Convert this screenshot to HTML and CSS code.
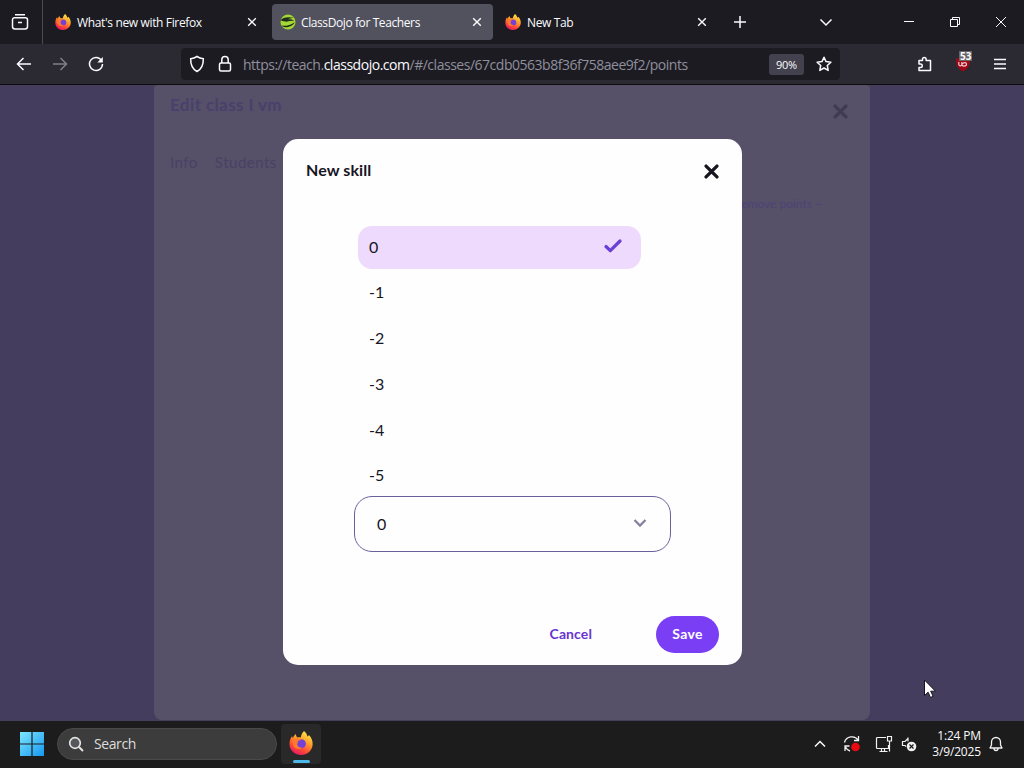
FILE: index.html
```html
<!DOCTYPE html>
<html lang="en">
<head>
    <meta charset="UTF-8">
    <meta name="viewport" content="width=device-width, initial-scale=1.0">
    <title>ClassDojo for Teachers</title>
    <link rel="stylesheet" href="styles.css">
</head>
<body>
    <!-- Shared icons -->
    <svg class="defs" width="0" height="0">
        <defs>
            <linearGradient id="flame" x1="0.8" y1="0" x2="0.3" y2="1">
                <stop offset="0" stop-color="#fff04a"/>
                <stop offset="0.4" stop-color="#ffa02a"/>
                <stop offset="0.75" stop-color="#ff4538"/>
                <stop offset="1" stop-color="#e3166b"/>
            </linearGradient>
            <linearGradient id="win" x1="0" y1="0" x2="1" y2="1">
                <stop offset="0" stop-color="#7ee6ff"/>
                <stop offset="1" stop-color="#1498f0"/>
            </linearGradient>
            <symbol id="firefox" viewBox="0 0 24 24">
                <path d="M15 0c2 1.500 3 3.500 3.500 5.500.8-.3 1.200-.8 1.400-1.500C22.500 6.500 24 10 23.600 14 23 20 18 24 12 24S.5 19.500.5 13c0-3 .8-5.500 2.500-8 .2 1 .5 1.600 1 2 .5-1.600 1.500-3 3-4-.1 1.500.3 2.500 1.500 3.500 1.200-.2 2.300-.2 3.300 0C12 4 13.200 1.800 15 0z" fill="url(#flame)"/>
                <circle cx="12.300" cy="12.800" r="4.600" fill="#7540d8"/>
                <path d="M4.500 9c2-2.200 5.500-2 7.500-.2-1 .8-2.600 1-3.400 1.400.4 1 .2 2-.4 3 .5 2.500 2.500 3.800 5 3.200-2 2.800-7 2-8.700-1.200C3.200 12.800 3.200 11 4.500 9z" fill="#ff7a2a"/>
            </symbol>
            <symbol id="close" viewBox="0 0 10 10">
                <path d="M1.200 1.200l7.600 7.600M8.800 1.200L1.200 8.800" stroke="currentColor" stroke-width="1.400"/>
            </symbol>
            <symbol id="cross" viewBox="0 0 16 16">
                <path d="M2.200 2.200l11.600 11.600M13.800 2.200L2.200 13.800" stroke="currentColor" stroke-width="3.500" stroke-linecap="round"/>
            </symbol>
        </defs>
    </svg>

    <!-- Tab strip -->
    <div class="tabbar">
        <div class="archive">
            <svg width="18" height="18" viewBox="0 0 18 18" class="line"><path d="M4 1.700h10M3.500 4.700h11a2 2 0 0 1 2 2v6.900a2.500 2.500 0 0 1-2.500 2.500H4a2.500 2.500 0 0 1-2.500-2.500V6.700a2 2 0 0 1 2-2zM7 9.500h4"/></svg>
        </div>
        <div class="tab">
            <svg width="16" height="16"><use href="#firefox"/></svg>
            <span class="tab-title">What's new with Firefox</span>
            <svg class="tab-close" width="10" height="10"><use href="#close"/></svg>
        </div>
        <div class="tab active">
            <svg width="16" height="16" viewBox="0 0 16 16">
                <circle cx="8" cy="8" r="7.500" fill="#a4d636"/>
                <path d="M.6 6.200C3 3 8 2.500 14 3.800c-2.500.4-4.500.8-6.500 1.600 2.500-.2 5 .2 6.700 1.400-3-.2-5.500.2-7.700 1C5 7.500 3 7.200.6 6.200zM1.500 11.500c3 .8 8.500.2 13-3.300-1 3.200-5.500 5-9 5-1.800 0-3.200-.6-4-1.700z" fill="#1c2b1c"/>
            </svg>
            <span class="tab-title">ClassDojo for Teachers</span>
            <svg class="tab-close" width="10" height="10"><use href="#close"/></svg>
        </div>
        <div class="tab">
            <svg width="16" height="16"><use href="#firefox"/></svg>
            <span class="tab-title">New Tab</span>
            <svg class="tab-close" width="10" height="10"><use href="#close"/></svg>
        </div>
        <svg class="new-tab line" width="14" height="14" viewBox="0 0 14 14"><path d="M7 1v12M1 7h12"/></svg>
        <svg class="all-tabs line" width="14" height="14" viewBox="0 0 14 14"><path d="M1.500 4.500L7 10l5.500-5.500"/></svg>
        <div class="window-buttons">
            <svg width="12" height="12" viewBox="0 0 12 12" class="thin"><path d="M1 5.500h10"/></svg>
            <svg width="12" height="12" viewBox="0 0 12 12" class="thin"><path d="M1.500 3.500h7v7h-7zM3.500 3.500v-2h7v7h-2"/></svg>
            <svg width="12" height="12" viewBox="0 0 12 12" class="thin"><path d="M1 1l10 10M11 1L1 11"/></svg>
        </div>
    </div>

    <!-- Address bar -->
    <div class="toolbar">
        <div class="nav">
            <svg width="16" height="16" viewBox="0 0 16 16" class="line"><path d="M15 8H1.500M7.500 2l-6 6 6 6"/></svg>
            <svg width="16" height="16" viewBox="0 0 16 16" class="line dim"><path d="M1 8h13.500M8.500 2l6 6-6 6"/></svg>
            <svg width="16" height="16" viewBox="0 0 16 16" class="line"><path d="M13.500 4.500A6.500 6.500 0 1 0 14.500 8"/><path d="M14.800 1v5.500H9.300z" fill="#fbfbfe" stroke="none"/></svg>
        </div>
        <div class="urlbar">
            <svg width="16" height="18" viewBox="0 0 16 18" class="line"><path d="M8 1.500c2 1.300 4 2 6.300 2.200C14.500 9.500 12.500 14 8 16.500 3.500 14 1.500 9.500 1.700 3.700 4 3.500 6 2.800 8 1.500z"/></svg>
            <svg class="lock line" width="14" height="18" viewBox="0 0 14 18"><rect x="1.500" y="8" width="11" height="8" rx="1.500"/><path d="M3.800 8V4.800a3.200 3.200 0 0 1 6.400 0V8"/></svg>
            <span class="url">https://teach.<b>classdojo.com</b>/#/classes/67cdb0563b8f36f758aee9f2/points</span>
            <span class="zoom">90%</span>
            <svg width="16" height="16" viewBox="0 0 16 16" class="line"><path d="M8 1.200l2 4.400 4.900.6-3.600 3.300.9 4.900L8 12l-4.200 2.400.9-4.900L1.100 6.200 6 5.600z" stroke-linejoin="round"/></svg>
        </div>
        <div class="tools">
            <svg width="16" height="16" viewBox="0 0 16 16" class="line"><path d="M2 4.500h3.500V3.200a1.800 1.800 0 0 1 3.600 0v1.300h4.400v10H2v-3h1.500a1.700 1.700 0 0 0 0-3.500H2z" stroke-linejoin="round"/></svg>
            <div class="ublock">
                <svg width="16" height="16" viewBox="0 0 16 16"><path d="M8 0c2 1.500 4.500 2.500 7 2.500 0 6-1 9.500-7 13C2 12 1 8.500 1 2.500 3.500 2.500 6 1.500 8 0z" fill="#a00817"/><path d="M3.800 6v2.300c0 2 3 2 3 0V6M6.800 8.300c0 2.300 4.700 2.300 4.700 0S8.500 6.300 7.500 8" fill="none" stroke="#f3c9cd" stroke-width="1.200"/></svg>
                <span class="count">53</span>
            </div>
            <svg width="14" height="14" viewBox="0 0 14 14" class="line"><path d="M1 2.500h12M1 7h12M1 11.500h12"/></svg>
        </div>
    </div>

    <!-- Page -->
    <div class="page">
        <div class="edit-class">
            <div class="edit-head">
                <h1>Edit class I vm</h1>
                <svg width="15" height="15"><use href="#cross"/></svg>
            </div>
            <div class="edit-tabs"><span>Info</span><span>Students</span></div>
            <div class="edit-link">remove points –</div>
        </div>

        <div class="overlay">
            <div class="modal">
                <div class="modal-head">
                    <h2>New skill</h2>
                    <svg width="15" height="15"><use href="#cross"/></svg>
                </div>
                <ul class="options">
                    <li class="selected">0
                        <svg width="20" height="16" viewBox="0 0 20 16"><path d="M3 8.500l4.300 4.200L17 3" fill="none" stroke="#6a3fd8" stroke-width="3.200" stroke-linecap="round" stroke-linejoin="round"/></svg>
                    </li>
                    <li>-1</li>
                    <li>-2</li>
                    <li>-3</li>
                    <li>-4</li>
                    <li>-5</li>
                </ul>
                <div class="select">0
                    <svg width="14" height="10" viewBox="0 0 14 10"><path d="M1.500 2l5.500 5.500L12.500 2" fill="none" stroke="#85819f" stroke-width="2.300"/></svg>
                </div>
                <div class="actions">
                    <span class="cancel">Cancel</span>
                    <span class="save">Save</span>
                </div>
            </div>
        </div>
        <svg class="cursor" width="14" height="20" viewBox="0 0 14 20"><path d="M1.500 1v15.500l3.600-3.300 2.400 5.300 2.600-1.200-2.400-5.100h4.800z" fill="#fff" stroke="#15131f" stroke-width="1"/></svg>
    </div>

    <!-- Taskbar -->
    <div class="taskbar">
        <svg class="start" width="24" height="24" viewBox="0 0 24 24"><path d="M0 0h11.400v11.400H0zM12.600 0H24v11.400H12.600zM0 12.600h11.400V24H0zM12.600 12.600H24V24H12.600z" fill="url(#win)"/></svg>
        <div class="search">
            <svg width="16" height="16" viewBox="0 0 16 16"><circle cx="7" cy="7" r="5.300" fill="#55575a" stroke="#e4e4e4" stroke-width="1.700"/><path d="M11 11l4 4" stroke="#e4e4e4" stroke-width="1.900"/></svg>
            <span>Search</span>
        </div>
        <div class="task">
            <svg width="24" height="24"><use href="#firefox"/></svg>
        </div>
        <div class="tray">
            <svg class="chev line" width="12" height="8" viewBox="0 0 12 8"><path d="M1 6.500l5-5 5 5"/></svg>
            <svg class="sync" width="18" height="18" viewBox="0 0 18 18"><path d="M1.500 7.500C3 1 12 0 15 5M15.500 1v4.500H11M2 16v-5h4.500M2.500 12c1 2 2.500 3.500 4.500 4" fill="none" stroke="#f2f2f2" stroke-width="1.300"/><circle cx="12.500" cy="12" r="4.300" fill="#ea0a12"/></svg>
            <svg class="net" width="18" height="18" viewBox="0 0 18 18"><path d="M11 2.500H2.500a1 1 0 0 0-1 1v9a1 1 0 0 0 1 1h11V10M4.500 16.500h8M6.500 13.500v3M9.500 13.500v3M12.500 1.500h4v4.500h-4zM14.500 6v10.500" fill="none" stroke="#f2f2f2" stroke-width="1.200"/></svg>
            <svg class="sound" width="16" height="16" viewBox="0 0 16 16"><path d="M7 2.500L4 5.500H1.500v4H4l1 1M7 1.500v4" fill="none" stroke="#f2f2f2" stroke-width="1.200"/><circle cx="10.500" cy="10.500" r="4.800" fill="#f2f2f2"/><path d="M8.500 8.500l4 4M12.500 8.500l-4 4" stroke="#1c1c1c" stroke-width="1.200"/></svg>
            <div class="clock"><span>1:24 PM</span><span>3/9/2025</span></div>
            <svg class="bell" width="14" height="16" viewBox="0 0 14 16"><path d="M1 12h12l-1.500-3V6a4.500 4.500 0 0 0-9 0v3zM5 12.500a2 2 0 0 0 4 0" fill="none" stroke="#f2f2f2" stroke-width="1.300" stroke-linejoin="round"/></svg>
        </div>
    </div>
</body>
</html>
```

FILE: styles.css
```css
* {
    box-sizing: border-box;
}

body {
    margin: 0;
    width: 1024px;
    height: 768px;
    overflow: hidden;
    display: flex;
    flex-direction: column;
    font-family: "Open Sans", "Noto Sans", sans-serif;
    font-size: 12px;
    color: #fbfbfe;
    background-color: #1c1b22;
}

svg {
    display: block;
    flex: none;
}

.defs {
    position: absolute;
}

.line {
    fill: none;
    stroke: #fbfbfe;
    stroke-width: 1.5;
}

.thin {
    fill: none;
    stroke: #fbfbfe;
    stroke-width: 1;
}

.dim {
    opacity: 0.4;
}

/* Tab strip */
.tabbar {
    flex: none;
    height: 44px;
    display: flex;
    align-items: center;
    background-color: #1c1b22;
}

.archive {
    width: 43px;
    height: 44px;
    padding-left: 11px;
    display: flex;
    align-items: center;
    border-right: 1px solid #4b4a55;
}

.tab {
    width: 221px;
    height: 36px;
    margin-left: 4px;
    padding: 0 11px 0 8px;
    display: flex;
    align-items: center;
    border-radius: 4px;
}

.tab.active {
    background-color: #52525e;
}

.tab-title {
    margin-left: 6px;
    white-space: nowrap;
    letter-spacing: -0.35px;
}

.active .tab-title {
    margin-left: 5px;
    letter-spacing: -0.4px;
}

.tab-close {
    margin-left: auto;
}

.new-tab {
    margin-left: 15px;
}

.all-tabs {
    margin-left: 72px;
}

.window-buttons {
    margin-left: auto;
    padding-right: 17px;
    display: flex;
    gap: 34px;
}

/* Address bar */
.toolbar {
    flex: none;
    height: 41px;
    display: flex;
    align-items: center;
    background-color: #2b2a33;
    border-bottom: 1px solid #0c0c0d;
}

.nav {
    width: 181px;
    padding-left: 16px;
    display: flex;
    gap: 20px;
}

.urlbar {
    width: 659px;
    height: 32px;
    padding: 0 8px;
    display: flex;
    align-items: center;
    background-color: #1c1b22;
    border-radius: 4px;
}

.lock {
    margin-left: 13px;
}

.url {
    margin-left: 11px;
    padding-top: 1px;
    font-size: 14px;
    color: #8f8f9d;
    white-space: nowrap;
    letter-spacing: -0.48px;
}

.url b {
    font-weight: normal;
    color: #fbfbfe;
}

.zoom {
    width: 35px;
    height: 21px;
    margin: 0 12px 0 auto;
    line-height: 21px;
    text-align: center;
    font-size: 11px;
    letter-spacing: -0.3px;
    background-color: #42414d;
    border-radius: 3px;
}

.tools {
    margin-left: auto;
    padding-right: 17px;
    display: flex;
    align-items: center;
    gap: 22px;
}

.ublock {
    position: relative;
}

.count {
    position: absolute;
    left: 4px;
    top: -5px;
    padding: 0 1px;
    font-size: 10px;
    font-weight: bold;
    line-height: 10px;
    background-color: #666;
}

/* Page */
.page {
    position: relative;
    height: 636px;
    background-color: #443d5e;
    font-family: Lato, sans-serif;
    overflow: hidden;
}

.edit-class {
    width: 716px;
    height: 635px;
    margin-left: 154px;
    padding: 9px 22px 0 16px;
    background-color: #565068;
    border-radius: 4px 4px 8px 8px;
    color: #484267;
}

.edit-head {
    height: 34px;
    display: flex;
    justify-content: space-between;
}

.edit-head h1 {
    margin: 0;
    font-size: 17px;
    line-height: 22px;
    font-weight: bold;
    letter-spacing: 0.4px;
    color: #48416b;
}

.edit-head svg {
    margin-top: 10px;
    color: #403b51;
}

.edit-tabs {
    margin-top: 23px;
    display: flex;
    gap: 17px;
    font-size: 15px;
    line-height: 22px;
    letter-spacing: 0.5px;
}

.edit-link {
    margin: 23px 26px 0 0;
    text-align: right;
    font-size: 12px;
    line-height: 16px;
    color: #4c4577;
}

.overlay {
    position: absolute;
    top: 0;
    left: 0;
    width: 1025px;
    height: 634px;
    display: flex;
    align-items: center;
    justify-content: center;
}

.modal {
    width: 459px;
    height: 526px;
    padding: 20px 23px 12px;
    display: flex;
    flex-direction: column;
    background-color: #fefefe;
    border-radius: 15px;
    color: #17151f;
}

.modal-head {
    height: 24px;
    display: flex;
    align-items: center;
    justify-content: space-between;
}

.modal-head h2 {
    margin: 0;
    padding-bottom: 3px;
    font-size: 16px;
    line-height: 22px;
    letter-spacing: 0.1px;
}

.options {
    width: 283px;
    margin: 43px 0 0 52px;
    padding: 0;
    display: flex;
    flex-direction: column;
    gap: 2.8px;
    list-style: none;
    font-size: 16px;
}

.options li {
    height: 43px;
    padding: 0 18px 3px 11px;
    display: flex;
    align-items: center;
    justify-content: space-between;
    border-radius: 14px;
}

.options .selected {
    background-color: #eddafc;
}

.select {
    flex: none;
    width: 317px;
    height: 56px;
    margin: -2px 0 0 48px;
    padding: 0 23px 1px 22px;
    display: flex;
    align-items: center;
    justify-content: space-between;
    border: 1px solid #68629c;
    border-radius: 18px;
    font-size: 16px;
}

.actions {
    margin-top: auto;
    display: flex;
    align-items: center;
    justify-content: flex-end;
    gap: 64px;
    font-size: 14px;
    font-weight: bold;
}

.cancel {
    padding-bottom: 2px;
    letter-spacing: 0.1px;
    color: #6834cf;
}

.save {
    width: 63px;
    height: 37px;
    line-height: 35px;
    text-align: center;
    letter-spacing: 0.3px;
    color: #fff;
    background-color: #7a3ff5;
    border-radius: 19px;
}

.cursor {
    position: absolute;
    left: 923px;
    top: 594px;
}

/* Taskbar */
.taskbar {
    flex: 1;
    padding-bottom: 2px;
    display: flex;
    align-items: center;
    background-color: #1c1c1c;
}

.start {
    margin-left: 20px;
}

.search {
    width: 220px;
    height: 32px;
    margin-left: 13px;
    padding-left: 10px;
    display: flex;
    align-items: center;
    gap: 10px;
    border: 1px solid #4a4a4a;
    border-radius: 16px;
    background-color: #3c3c3c;
    font-size: 14px;
    letter-spacing: -0.4px;
    color: #dcdcdc;
}

.task {
    width: 40px;
    height: 40px;
    margin-left: 4px;
    padding-top: 7px;
    display: flex;
    flex-direction: column;
    align-items: center;
    border-radius: 4px;
    background-color: #292929;
}

.task::after {
    content: "";
    width: 17px;
    height: 3px;
    margin-top: 5px;
    border-radius: 2px;
    background-color: #4cb8ea;
}

.tray {
    margin-left: auto;
    padding-right: 21px;
    display: flex;
    align-items: center;
}

.sync {
    margin-left: 17px;
}

.net {
    margin-left: 14px;
}

.sound {
    margin-left: 8px;
}

.clock {
    width: 64px;
    display: flex;
    flex-direction: column;
    align-items: flex-end;
    line-height: 16px;
    font-size: 12px;
    letter-spacing: -0.15px;
}

.bell {
    margin-left: 8px;
}
```
